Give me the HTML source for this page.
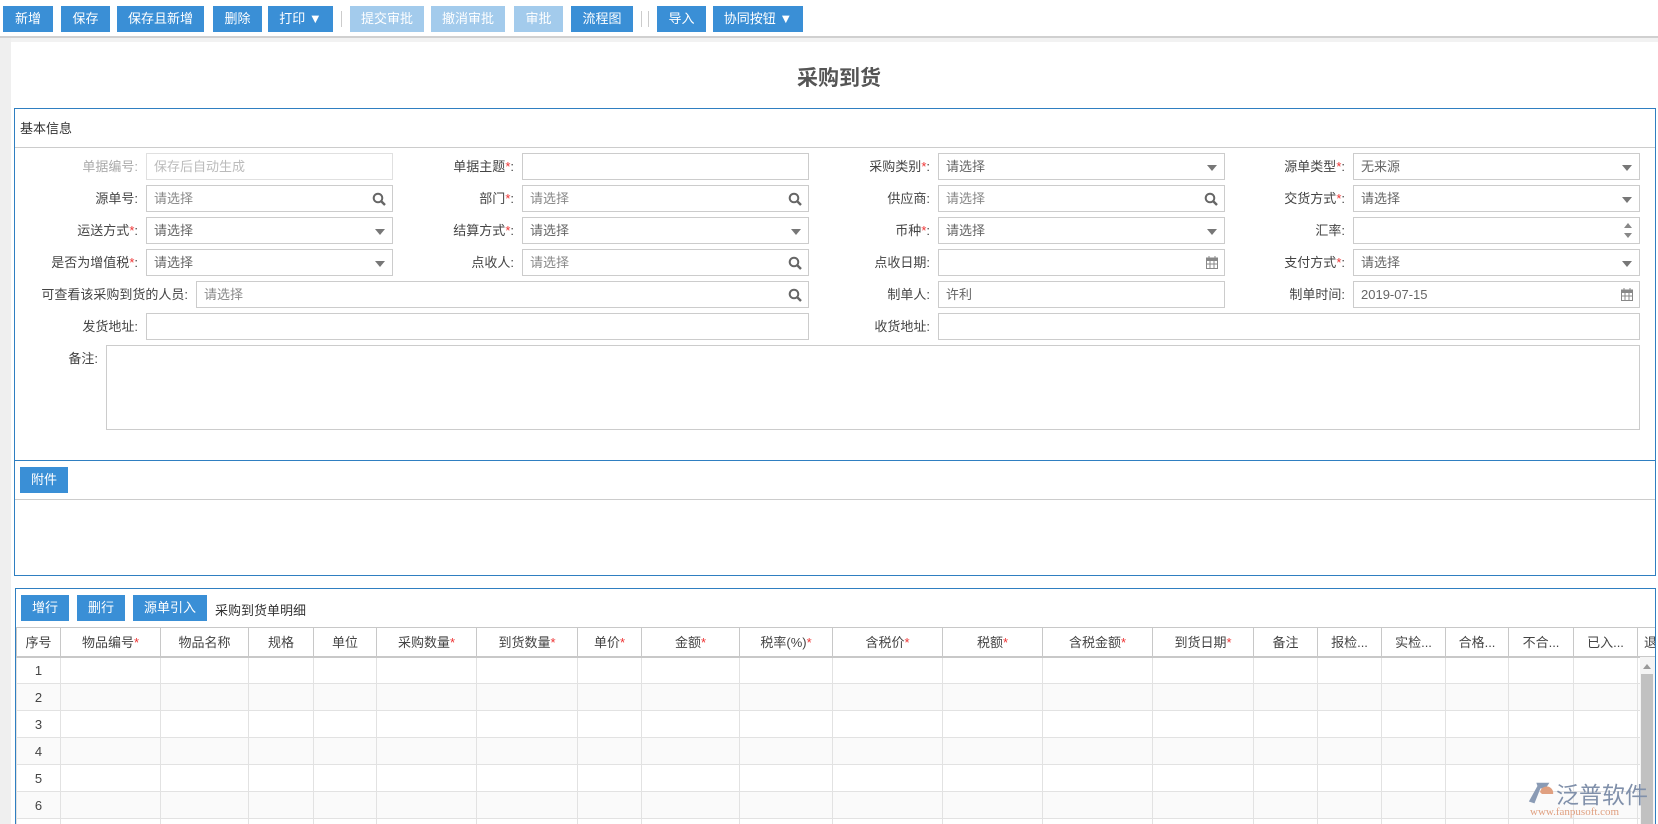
<!DOCTYPE html>
<html><head><meta charset="utf-8">
<style>
*{box-sizing:border-box;margin:0;padding:0}
html,body{overflow:hidden;width:1658px;height:824px}
body{background:#fff;font-family:"Liberation Sans","Noto Sans CJK SC",sans-serif;font-size:13px;color:#333}
#w{position:relative;width:1658px;height:824px;overflow:hidden}
.a{position:absolute}
.btn{position:absolute;top:6px;height:26px;background:#3a8fd6;color:#fff;font-size:13px;line-height:26px;text-align:center;white-space:nowrap}
.dis{background:#a3cbec}
.sep{position:absolute;top:11px;width:1px;height:16px;background:#ccc}
.lbl{position:absolute;text-align:right;font-size:13px;color:#444;line-height:27px;white-space:nowrap}
.lbl i{color:#e33;font-style:normal}
.in{position:absolute;height:27px;border:1px solid #ccc;background:#fff;line-height:25px;padding-left:7px;color:#666;font-size:13px}
.ph{color:#888}
.box{position:absolute;border:1px solid #2f7fc1;background:#fff}
.ic{position:absolute;right:6px;top:0}
.tri{position:absolute;right:7px;top:11px;width:0;height:0;border-left:5px solid transparent;border-right:5px solid transparent;border-top:6px solid #777}
table{border-collapse:collapse;table-layout:fixed}
td,th{border:1px solid #e2e2e2;height:27px;font-weight:normal;text-align:center;color:#444;font-size:13px;white-space:nowrap;overflow:hidden}
th{border-color:#c8c8c8;height:29px;border-bottom:2px solid #c8c8c8}
th i{color:#e33;font-style:normal}
tr.e td{background:#fafafa}
</style></head><body><div id="w">
<div class="a" style="left:0;top:0;width:1658px;height:38px;background:#fff;border-bottom:2px solid #d0d0d0"></div>
<div class="a" style="left:0;top:38px;width:11px;height:786px;background:#efefef"></div>
<div class="a" style="left:11px;top:38px;width:1647px;height:4px;background:#f2f2f2"></div>

<div class="btn" style="left:3px;width:50px">新增</div>
<div class="btn" style="left:61px;width:49px">保存</div>
<div class="btn" style="left:117px;width:87px">保存且新增</div>
<div class="btn" style="left:213px;width:49px">删除</div>
<div class="btn" style="left:268px;width:65px">打印 ▼</div>
<div class="sep" style="left:341px"></div>
<div class="btn dis" style="left:350px;width:74px">提交审批</div>
<div class="btn dis" style="left:431px;width:74px">撤消审批</div>
<div class="btn dis" style="left:514px;width:49px">审批</div>
<div class="btn" style="left:571px;width:62px">流程图</div>
<div class="sep" style="left:641px"></div><div class="sep" style="left:648px"></div>
<div class="btn" style="left:657px;width:49px">导入</div>
<div class="btn" style="left:713px;width:90px">协同按钮 ▼</div>

<div class="a" style="left:797px;top:62px;font-size:21px;font-weight:bold;color:#555">采购到货</div>

<div class="box" style="left:14px;top:108px;width:1642px;height:353px"></div>
<div class="a" style="left:20px;top:118px;font-size:13px;color:#333">基本信息</div>
<div class="a" style="left:15px;top:147px;width:1640px;height:1px;background:#ccc"></div>

<div class="lbl" style="left:20px;width:118px;top:153px;color:#aaa">单据编号:</div>
<div class="in" style="left:146px;top:153px;width:247px;border-color:#e0e0e0;color:#bbb">保存后自动生成</div>
<div class="lbl" style="left:390px;width:124px;top:153px">单据主题<i>*</i>:</div>
<div class="in" style="left:522px;top:153px;width:287px"></div>
<div class="lbl" style="left:800px;width:130px;top:153px">采购类别<i>*</i>:</div>
<div class="in" style="left:938px;top:153px;width:287px">请选择<span class="tri"></span></div>
<div class="lbl" style="left:1200px;width:145px;top:153px">源单类型<i>*</i>:</div>
<div class="in" style="left:1353px;top:153px;width:287px">无来源<span class="tri"></span></div>

<div class="lbl" style="left:20px;width:118px;top:185px">源单号:</div>
<div class="in ph" style="left:146px;top:185px;width:247px">请选择<svg class="ic" style="top:6px" width="14" height="14" viewBox="0 0 14 14"><circle cx="6" cy="6" r="4.3" fill="none" stroke="#666" stroke-width="2"/><path d="M9 9l4 4" stroke="#666" stroke-width="2.4"/></svg></div>
<div class="lbl" style="left:390px;width:124px;top:185px">部门<i>*</i>:</div>
<div class="in ph" style="left:522px;top:185px;width:287px">请选择<svg class="ic" style="top:6px" width="14" height="14" viewBox="0 0 14 14"><circle cx="6" cy="6" r="4.3" fill="none" stroke="#666" stroke-width="2"/><path d="M9 9l4 4" stroke="#666" stroke-width="2.4"/></svg></div>
<div class="lbl" style="left:800px;width:130px;top:185px">供应商:</div>
<div class="in ph" style="left:938px;top:185px;width:287px">请选择<svg class="ic" style="top:6px" width="14" height="14" viewBox="0 0 14 14"><circle cx="6" cy="6" r="4.3" fill="none" stroke="#666" stroke-width="2"/><path d="M9 9l4 4" stroke="#666" stroke-width="2.4"/></svg></div>
<div class="lbl" style="left:1200px;width:145px;top:185px">交货方式<i>*</i>:</div>
<div class="in" style="left:1353px;top:185px;width:287px">请选择<span class="tri"></span></div>

<div class="lbl" style="left:20px;width:118px;top:217px">运送方式<i>*</i>:</div>
<div class="in" style="left:146px;top:217px;width:247px">请选择<span class="tri"></span></div>
<div class="lbl" style="left:390px;width:124px;top:217px">结算方式<i>*</i>:</div>
<div class="in" style="left:522px;top:217px;width:287px">请选择<span class="tri"></span></div>
<div class="lbl" style="left:800px;width:130px;top:217px">币种<i>*</i>:</div>
<div class="in" style="left:938px;top:217px;width:287px">请选择<span class="tri"></span></div>
<div class="lbl" style="left:1200px;width:145px;top:217px">汇率:</div>
<div class="in" style="left:1353px;top:217px;width:287px"><span class="a" style="right:7px;top:5px;border-left:4px solid transparent;border-right:4px solid transparent;border-bottom:5px solid #888"></span><span class="a" style="right:7px;top:15px;border-left:4px solid transparent;border-right:4px solid transparent;border-top:5px solid #888"></span></div>

<div class="lbl" style="left:20px;width:118px;top:249px">是否为增值税<i>*</i>:</div>
<div class="in" style="left:146px;top:249px;width:247px">请选择<span class="tri"></span></div>
<div class="lbl" style="left:390px;width:124px;top:249px">点收人:</div>
<div class="in ph" style="left:522px;top:249px;width:287px">请选择<svg class="ic" style="top:6px" width="14" height="14" viewBox="0 0 14 14"><circle cx="6" cy="6" r="4.3" fill="none" stroke="#666" stroke-width="2"/><path d="M9 9l4 4" stroke="#666" stroke-width="2.4"/></svg></div>
<div class="lbl" style="left:800px;width:130px;top:249px">点收日期:</div>
<div class="in" style="left:938px;top:249px;width:287px"><svg class="ic" style="top:6px" width="12" height="13" viewBox="0 0 12 13"><rect x="0.5" y="2" width="11" height="10.5" fill="none" stroke="#888"/><rect x="0.5" y="2" width="11" height="3" fill="#888"/><path d="M3 0v3M9 0v3M0 8h12M4 5v8M8 5v8" stroke="#888"/></svg></div>
<div class="lbl" style="left:1200px;width:145px;top:249px">支付方式<i>*</i>:</div>
<div class="in" style="left:1353px;top:249px;width:287px">请选择<span class="tri"></span></div>

<div class="lbl" style="left:20px;width:168px;top:281px">可查看该采购到货的人员:</div>
<div class="in ph" style="left:196px;top:281px;width:613px">请选择<svg class="ic" style="top:6px" width="14" height="14" viewBox="0 0 14 14"><circle cx="6" cy="6" r="4.3" fill="none" stroke="#666" stroke-width="2"/><path d="M9 9l4 4" stroke="#666" stroke-width="2.4"/></svg></div>
<div class="lbl" style="left:800px;width:130px;top:281px">制单人:</div>
<div class="in" style="left:938px;top:281px;width:287px">许利</div>
<div class="lbl" style="left:1200px;width:145px;top:281px">制单时间:</div>
<div class="in" style="left:1353px;top:281px;width:287px">2019-07-15<svg class="ic" style="top:6px" width="12" height="13" viewBox="0 0 12 13"><rect x="0.5" y="2" width="11" height="10.5" fill="none" stroke="#888"/><rect x="0.5" y="2" width="11" height="3" fill="#888"/><path d="M3 0v3M9 0v3M0 8h12M4 5v8M8 5v8" stroke="#888"/></svg></div>

<div class="lbl" style="left:20px;width:118px;top:313px">发货地址:</div>
<div class="in" style="left:146px;top:313px;width:663px"></div>
<div class="lbl" style="left:800px;width:130px;top:313px">收货地址:</div>
<div class="in" style="left:938px;top:313px;width:702px"></div>

<div class="lbl" style="left:40px;width:58px;top:345px">备注:</div>
<div class="in" style="left:106px;top:345px;width:1534px;height:85px"></div>

<div class="box" style="left:14px;top:460px;width:1642px;height:116px"></div>
<div class="btn" style="left:20px;top:467px;width:48px">附件</div>
<div class="a" style="left:15px;top:499px;width:1640px;height:1px;background:#ccc"></div>

<div class="box" style="left:15px;top:588px;width:1641px;height:236px;border-bottom:none"></div>
<div class="btn" style="left:21px;top:595px;width:48px">增行</div>
<div class="btn" style="left:77px;top:595px;width:48px">删行</div>
<div class="btn" style="left:133px;top:595px;width:74px">源单引入</div>
<div class="a" style="left:215px;top:600px;color:#333">采购到货单明细</div>

<div class="a" style="left:16px;top:627px;width:1639px;height:197px;overflow:hidden">
<table style="width:1700px">
<colgroup><col style="width:44px"><col style="width:100px"><col style="width:88px"><col style="width:65px"><col style="width:63px"><col style="width:100px"><col style="width:101px"><col style="width:64px"><col style="width:98px"><col style="width:93px"><col style="width:110px"><col style="width:100px"><col style="width:110px"><col style="width:101px"><col style="width:64px"><col style="width:64px"><col style="width:64px"><col style="width:63px"><col style="width:65px"><col style="width:64px"><col style="width:79px"></colgroup>
<tr><th>序号</th><th>物品编号<i>*</i></th><th>物品名称</th><th>规格</th><th>单位</th><th>采购数量<i>*</i></th><th>到货数量<i>*</i></th><th>单价<i>*</i></th><th>金额<i>*</i></th><th>税率(%)<i>*</i></th><th>含税价<i>*</i></th><th>税额<i>*</i></th><th>含税金额<i>*</i></th><th>到货日期<i>*</i></th><th>备注</th><th>报检...</th><th>实检...</th><th>合格...</th><th>不合...</th><th>已入...</th><th style="text-align:left;padding-left:6px">退</th></tr>
<tr><td>1</td><td></td><td></td><td></td><td></td><td></td><td></td><td></td><td></td><td></td><td></td><td></td><td></td><td></td><td></td><td></td><td></td><td></td><td></td><td></td><td></td></tr>
<tr class="e"><td>2</td><td></td><td></td><td></td><td></td><td></td><td></td><td></td><td></td><td></td><td></td><td></td><td></td><td></td><td></td><td></td><td></td><td></td><td></td><td></td><td></td></tr>
<tr><td>3</td><td></td><td></td><td></td><td></td><td></td><td></td><td></td><td></td><td></td><td></td><td></td><td></td><td></td><td></td><td></td><td></td><td></td><td></td><td></td><td></td></tr>
<tr class="e"><td>4</td><td></td><td></td><td></td><td></td><td></td><td></td><td></td><td></td><td></td><td></td><td></td><td></td><td></td><td></td><td></td><td></td><td></td><td></td><td></td><td></td></tr>
<tr><td>5</td><td></td><td></td><td></td><td></td><td></td><td></td><td></td><td></td><td></td><td></td><td></td><td></td><td></td><td></td><td></td><td></td><td></td><td></td><td></td><td></td></tr>
<tr class="e"><td>6</td><td></td><td></td><td></td><td></td><td></td><td></td><td></td><td></td><td></td><td></td><td></td><td></td><td></td><td></td><td></td><td></td><td></td><td></td><td></td><td></td></tr>
<tr><td>7</td><td></td><td></td><td></td><td></td><td></td><td></td><td></td><td></td><td></td><td></td><td></td><td></td><td></td><td></td><td></td><td></td><td></td><td></td><td></td><td></td></tr>
</table>
</div>
<div class="a" style="left:1640px;top:657px;width:15px;height:167px;background:#f4f4f4"></div>
<div class="a" style="left:1643px;top:664px;border-left:4px solid transparent;border-right:4px solid transparent;border-bottom:5px solid #999"></div>
<div class="a" style="left:1641px;top:674px;width:12px;height:150px;background:#c1c1c1"></div>

<svg class="a" style="left:1527px;top:782px" width="28" height="24" viewBox="0 0 30 24"><path d="M10 0h14l-4 6h-8z" fill="#8a9bb5"/><path d="M2 20L12 2h4L8 22z" fill="#8a9bb5"/><path d="M14 10a7 7 0 0 1 14 2h-12z" fill="#e0a080"/></svg>
<div class="a" style="left:1556px;top:780px;font-size:23px;color:#8090aa;font-family:'Noto Sans CJK SC',sans-serif;line-height:26px;white-space:nowrap">泛普软件</div>
<div class="a" style="left:1530px;top:806px;font-size:11px;line-height:12px;color:#e0a080;font-family:'Liberation Serif',serif;white-space:nowrap">www.fanpusoft.com</div>
</div></body></html>
